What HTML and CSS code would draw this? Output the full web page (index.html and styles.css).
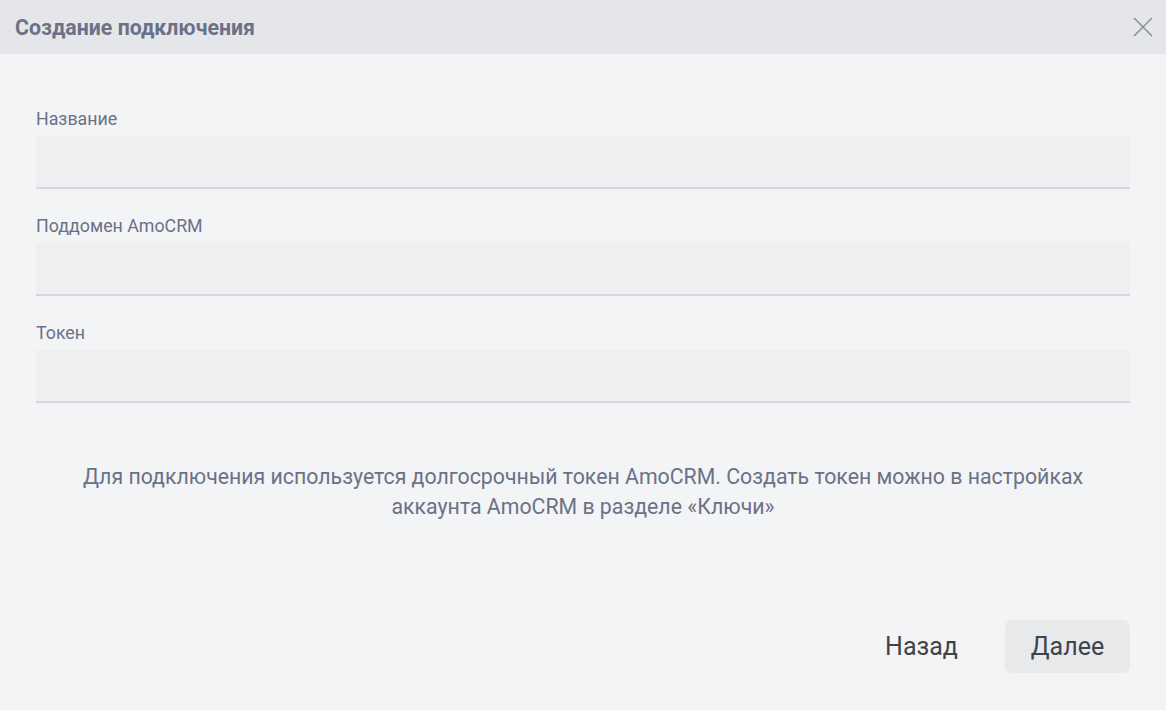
FILE: index.html
```html
<!DOCTYPE html>
<html lang="ru">
<head>
<meta charset="utf-8">
<title>Создание подключения</title>
<link rel="stylesheet" href="styles.css">
</head>
<body>
<div class="modal">
  <header class="modal-header">
    <h1 class="modal-title">Создание подключения</h1>
    <button class="close-btn" aria-label="Закрыть">
      <svg width="20" height="20" viewBox="0 0 20 20"><path d="M1 1L19 19M19 1L1 19" stroke="#8a8d9c" stroke-width="1.5" fill="none"/></svg>
    </button>
  </header>
  <main class="modal-body">
    <div class="field">
      <label class="field-label">Название</label>
      <div class="field-input"></div>
    </div>
    <div class="field">
      <label class="field-label">Поддомен AmoCRM</label>
      <div class="field-input"></div>
    </div>
    <div class="field">
      <label class="field-label">Токен</label>
      <div class="field-input"></div>
    </div>
    <p class="note">Для подключения используется долгосрочный токен AmoCRM. Создать токен можно в настройках<br>аккаунта AmoCRM в разделе «Ключи»</p>
  </main>
  <footer class="modal-footer">
    <button class="btn btn-ghost">Назад</button>
    <button class="btn btn-primary">Далее</button>
  </footer>
</div>
</body>
</html>
```
FILE: styles.css
```css
* { box-sizing: border-box; }
html, body { margin: 0; padding: 0; }
body {
  width: 1166px;
  height: 710px;
  background: #f3f4f6;
  font-family: Roboto, "Liberation Sans", sans-serif;
  overflow: hidden;
}
.modal {
  display: flex;
  flex-direction: column;
  height: 710px;
}
.modal-header {
  height: 54px;
  background: #e5e6ea;
  display: flex;
  align-items: center;
  justify-content: space-between;
  padding: 0 13px 0 15px;
}
.modal-title {
  margin: 0;
  font-size: 21.3px;
  font-weight: 700;
  color: #6b7187;
}
.close-btn {
  background: none;
  border: 0;
  padding: 0;
  width: 20px;
  height: 20px;
  display: flex;
}
.modal-body {
  padding: 55px 36px 0 36px;
  display: flex;
  flex-direction: column;
  gap: 27px;
}
.field {
  display: flex;
  flex-direction: column;
  gap: 7px;
}
.field-label {
  font-size: 17.8px;
  line-height: 20px;
  color: #6b7187;
}
.field-input {
  height: 53px;
  background: #eeeff1;
  border-bottom: 2px solid #d6d7db;
}
.note {
  margin: 32px 0 0 0;
  text-align: center;
  font-size: 21.3px;
  line-height: 30px;
  color: #6b7187;
}
.modal-footer {
  margin-top: auto;
  display: flex;
  justify-content: flex-end;
  gap: 21px;
  padding: 0 36px 37px 0;
}
.btn {
  height: 53px;
  width: 125px;
  border: 0;
  border-radius: 7px;
  font-family: Roboto, "Liberation Sans", sans-serif;
  font-size: 25px;
  color: #3f434b;
  cursor: pointer;
}
.btn-ghost { background: transparent; }
.btn-primary { background: #e8e9eb; }
```
